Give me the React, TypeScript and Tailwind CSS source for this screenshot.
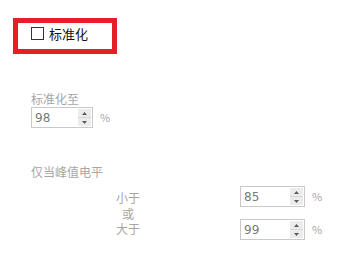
import React from 'react'

const font = { fontFamily: '"Noto Sans CJK SC", "Liberation Sans", sans-serif' }

function SpinBox({ value, width }: { value: string; width: string }) {
  return (
    <div className="flex items-center">
      <div className={`flex h-[21px] ${width} border border-[#c9c9c9] bg-white`}>
        <div className="flex flex-1 items-center pl-[3px] text-[12px] leading-none text-[#7a7a7a]" style={{ fontFamily: '"DejaVu Sans", sans-serif' }}>
          {value}
        </div>
        <div className="m-px flex w-[13px] flex-col bg-[#ececec]">
          <div className="flex flex-1 items-center justify-center border-b border-[#d6d6d6]">
            <svg width="5" height="3" viewBox="0 0 5 3">
              <path d="M2.5 0L5 3H0z" fill="#5a5a5a" />
            </svg>
          </div>
          <div className="flex flex-1 items-center justify-center">
            <svg width="5" height="3" viewBox="0 0 5 3">
              <path d="M0 0h5L2.5 3z" fill="#5a5a5a" />
            </svg>
          </div>
        </div>
      </div>
      <span className="ml-[7px] text-[11px] leading-none text-[#a8a8a8]">%</span>
    </div>
  )
}

export default function App() {
  return (
    <div className="h-[258px] w-[345px] overflow-hidden bg-white" style={font}>
      <div className="pl-[13px] pt-[18px]">
        <div className="flex h-[36px] w-[104px] items-center border-[5px] border-[#e61e28] pb-[5px] pl-[13px]">
          <div className="h-[13px] w-[13px] border border-[#333333] bg-white" />
          <span className="ml-[5px] text-[13px] leading-none text-[#111111]">标准化</span>
        </div>
      </div>

      <div className="pl-[31px] pt-[38px]">
        <div className="text-[12px] leading-[14px] text-[#a6a6a6]">标准化至</div>
        <div className="mt-px">
          <SpinBox value="98" width="w-[62px]" />
        </div>
      </div>

      <div className="pl-[31px] pt-[37px] text-[12px] leading-[14px] text-[#a6a6a6]">仅当峰值电平</div>

      <div className="mt-[7px] flex">
        <div className="ml-[98px] flex w-[60px] flex-col pt-[4px] text-center text-[12px] leading-[15.5px] text-[#a6a6a6]">
          <span>小于</span>
          <span>或</span>
          <span>大于</span>
        </div>
        <div className="ml-[82px] flex flex-col gap-[12px]">
          <SpinBox value="85" width="w-[65px]" />
          <SpinBox value="99" width="w-[65px]" />
        </div>
      </div>
    </div>
  )
}
